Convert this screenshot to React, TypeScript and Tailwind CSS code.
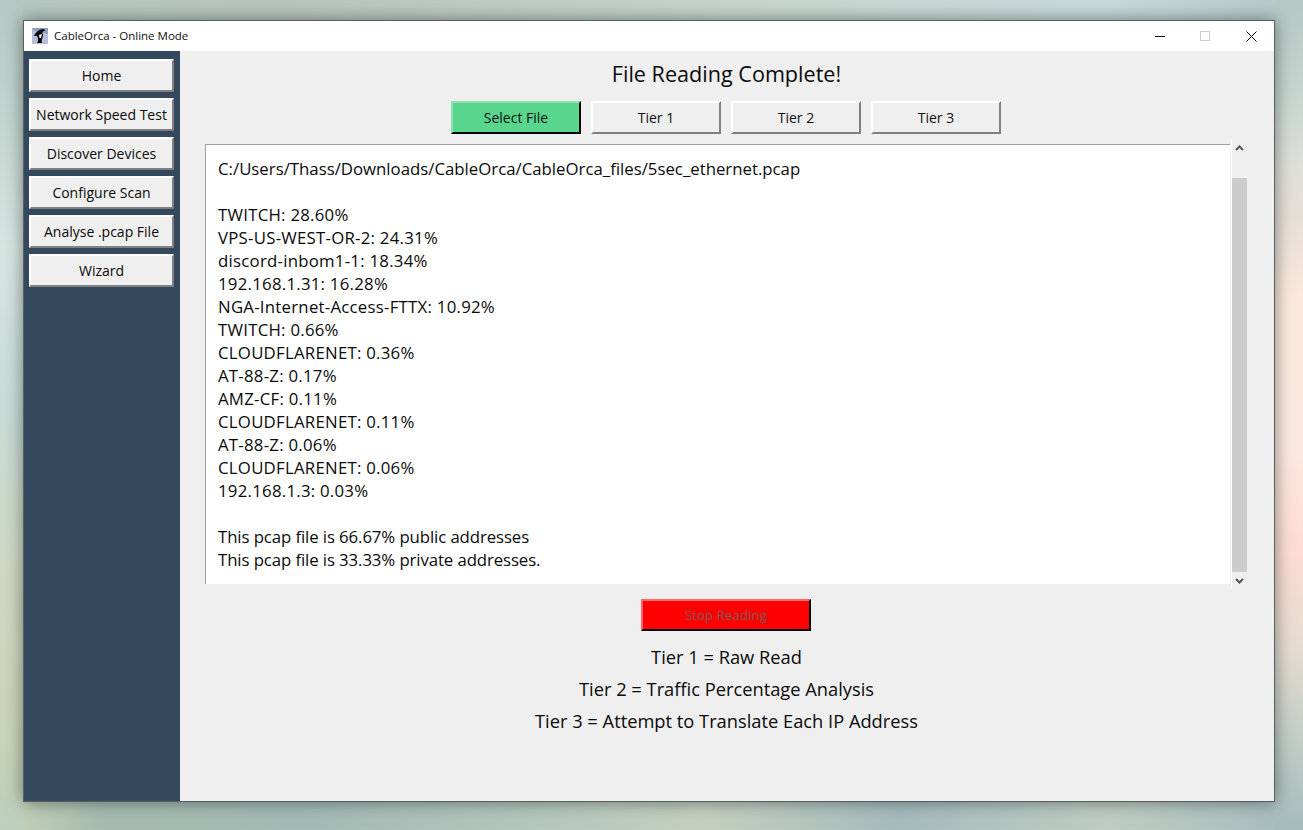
const font = "[font-family:'Open_Sans','Noto_Sans',sans-serif]";

function SideButton({ label }: { label: string }) {
  return (
    <button className="w-[145px] h-[33px] shrink-0 pb-px bg-[#efefef] text-[14px] text-[#0a0a0a] border-2 border-t-white border-l-white border-r-[#808080] border-b-[#808080] text-center">
      {label}
    </button>
  );
}

function TopButton({ label, green }: { label: string; green?: boolean }) {
  return (
    <button
      className={
        green
          ? "w-[130px] h-[33px] bg-[#58d68d] text-[14px] text-[#101010] border-2 border-t-[#8ce5b0] border-l-[#8ce5b0] border-r-black border-b-black"
          : "w-[130px] h-[33px] bg-[#efefef] text-[14px] text-[#101010] border-2 border-t-white border-l-white border-r-[#808080] border-b-[#808080]"
      }
    >
      {label}
    </button>
  );
}

const path = "C:/Users/Thass/Downloads/CableOrca/CableOrca_files/5sec_ethernet.pcap";
const rows = [
  "TWITCH: 28.60%",
  "VPS-US-WEST-OR-2: 24.31%",
  "discord-inbom1-1: 18.34%",
  "192.168.1.31: 16.28%",
  "NGA-Internet-Access-FTTX: 10.92%",
  "TWITCH: 0.66%",
  "CLOUDFLARENET: 0.36%",
  "AT-88-Z: 0.17%",
  "AMZ-CF: 0.11%",
  "CLOUDFLARENET: 0.11%",
  "AT-88-Z: 0.06%",
  "CLOUDFLARENET: 0.06%",
  "192.168.1.3: 0.03%",
];
const summary = [
  "This pcap file is 66.67% public addresses",
  "This pcap file is 33.33% private addresses.",
];

export default function App() {
  return (
    <div
      className={`w-[1303px] h-[830px] overflow-hidden pt-[20px] pl-[23px] ${font} [background:linear-gradient(to_bottom,#b5c8c4_0%,#c4d6d0_15%,#d8e6e2_30%,#c8dcd8_48%,#d0d8c0_72%,#c8d4b8_90%,#bccfbc_100%)_left_top/23px_100%_no-repeat,linear-gradient(to_bottom,#b5c8c4_0%,#c8d6d0_12%,#dfe0d8_20%,#e6dfd8_26%,#fde8dc_36%,#fde8e0_54%,#fddcd2_67%,#e5dcd0_78%,#c8d0c8_87%,#a5bcbc_100%)_right_top/28px_100%_no-repeat,linear-gradient(to_right,#b5c8c2_0%,#b9c6bc_23%,#c8d7cf_60%,#c8dadb_85%,#b4c9c6_100%)_left_top/100%_20px_no-repeat,linear-gradient(to_right,#c8d4b8_0%,#a5bbb0_8%,#a3bab4_23%,#b0c5bc_38%,#c5cfc0_54%,#a5bcbc_69%,#bfcdc3_85%,#a5bcbc_100%)_left_bottom/100%_28px_no-repeat,#c0d2cc]`}
    >
      <div className="w-[1252px] h-[782px] flex flex-col border border-[#5a5f60] bg-[#efefef] shadow-[0_0_16px_rgba(30,40,40,0.55)]">
        {/* title bar */}
        <div className="h-[30px] shrink-0 bg-white flex items-center">
          <svg width="16" height="16" viewBox="0 0 16 16" className="ml-[8px]">
            <rect width="16" height="16" fill="#b4bfd8" />
            <path d="M0 0 H16 V6 L9 4 L2 3 Z" fill="#8f9fc0" />
            <path d="M2 8 C4 4 7 1 12 1 L13 3 C10 3 10 5 11 7 C11 10 9 12 10 15 L5 15 C7 12 6 10 5 8 Z" fill="#08080e" />
            <path d="M7 7 L10 6 L9 10 L7.5 10 Z" fill="#f4f4f4" />
          </svg>
          <span className="ml-[6px] text-[11.5px] text-[#101010]">CableOrca - Online Mode</span>
          <div className="ml-auto flex items-center h-full">
            <div className="w-[46px] flex justify-center pl-px">
              <div className="w-[10px] h-px bg-black" />
            </div>
            <div className="w-[46px] flex justify-center">
              <div className="w-[10px] h-[10px] border border-[#cccccc]" />
            </div>
            <div className="w-[46px] flex justify-center">
              <svg width="11" height="11" viewBox="0 0 11 11">
                <path d="M0.5 0.5 L10.5 10.5 M10.5 0.5 L0.5 10.5" stroke="#000" strokeWidth="1" />
              </svg>
            </div>
          </div>
        </div>
        <div className="flex-1 flex min-h-0">
          {/* sidebar */}
          <div className="w-[156px] shrink-0 bg-[#34495e] flex flex-col gap-[6px] pt-[8px] pl-[5px]">
            <SideButton label="Home" />
            <SideButton label="Network Speed Test" />
            <SideButton label="Discover Devices" />
            <SideButton label="Configure Scan" />
            <SideButton label="Analyse .pcap File" />
            <SideButton label="Wizard" />
          </div>
          {/* main */}
          <div className="flex-1 flex flex-col items-start text-[#0a0a0a]">
            <div className="w-[1093px] h-[50px] pt-[8px] text-center text-[21.6px] leading-[30px]">
              File Reading Complete!
            </div>
            <div className="w-[1092px] flex justify-center gap-[10px]">
              <TopButton label="Select File" green />
              <TopButton label="Tier 1" />
              <TopButton label="Tier 2" />
              <TopButton label="Tier 3" />
            </div>
            <div className="mt-[5px] ml-[25px] flex h-[450px] items-start">
              <div className="mt-[5px] w-[1025px] h-[440px] bg-white border-t border-l border-[#a0a0a0] pl-[12px] pt-[12px] text-[16.8px] leading-[23px] whitespace-pre">
                <div className="h-[46px]">{path}</div>
                <div className="h-[322px] tracking-[0.25px]">
                  {rows.map((l, i) => (
                    <div key={i} className="h-[23px]">
                      {l}
                    </div>
                  ))}
                </div>
                <div className="tracking-[-0.1px]">
                  {summary.map((l, i) => (
                    <div key={i} className="h-[23px]">
                      {l}
                    </div>
                  ))}
                </div>
              </div>
              <div className="w-px h-[450px] bg-white ml-px" />
              <div className="w-[15px] h-[450px] flex flex-col items-center">
                <svg width="9" height="6" viewBox="0 0 9 6" className="mt-[6px]">
                  <path d="M1 5 L4.5 1.5 L8 5" fill="none" stroke="#555" strokeWidth="2" />
                </svg>
                <div className="w-[15px] h-[394px] bg-[#cccccc] mt-[27px]" />
                <svg width="9" height="6" viewBox="0 0 9 6" className="mt-[6px]">
                  <path d="M1 1 L4.5 4.5 L8 1" fill="none" stroke="#555" strokeWidth="2" />
                </svg>
              </div>
            </div>
            <div className="w-[1092px] flex justify-center mt-[10px]">
              <button className="w-[170px] h-[32px] bg-[#ff0000] text-[13.4px] text-[#7a5a5a] border-2 border-t-[#ff6666] border-l-[#ff6666] border-r-black border-b-black">
                Stop Reading
              </button>
            </div>
            <div className="w-[1093px] mt-[10px] flex flex-col items-center text-[18.3px] leading-[32px]">
              <div>Tier 1 = Raw Read</div>
              <div>Tier 2 = Traffic Percentage Analysis</div>
              <div>Tier 3 = Attempt to Translate Each IP Address</div>
            </div>
          </div>
        </div>
      </div>
    </div>
  );
}
